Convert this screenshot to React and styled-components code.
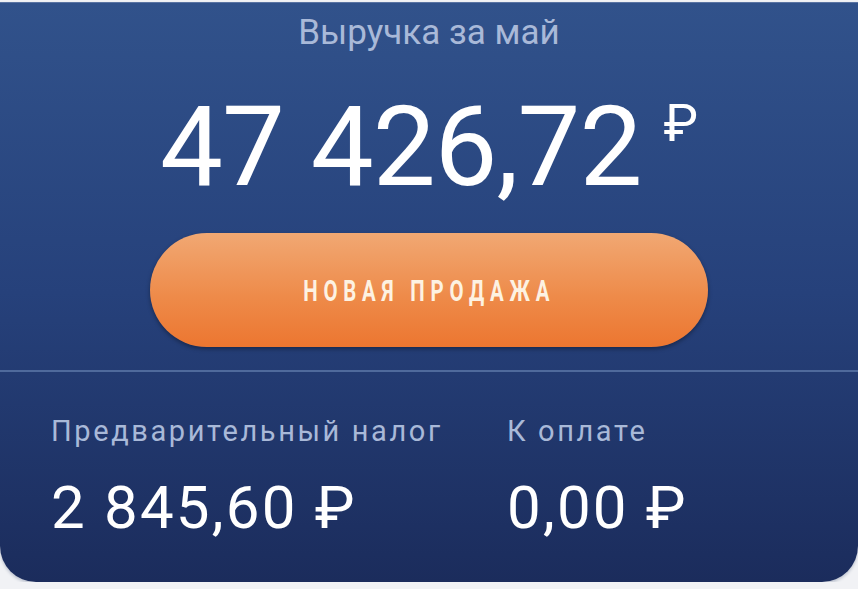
import React from "react";
import styled, { createGlobalStyle } from "styled-components";

const Global = createGlobalStyle`
  html, body {
    margin: 0;
    padding: 0;
    background: #f1f2f5;
    font-family: Roboto, "Noto Sans", sans-serif;
  }
`;

const Card = styled.div`
  width: 858px;
  height: 580px;
  box-sizing: border-box;
  margin-top: 2px;
  border-radius: 0 0 36px 36px;
  background: linear-gradient(180deg, #31528b 0%, #26417b 50%, #1b2c5c 100%);
  border-top: 1px solid #5a74a3;
  display: flex;
  flex-direction: column;
  overflow: hidden;
  box-shadow: 0 2px 3px rgba(40, 60, 100, 0.25);
`;

const Top = styled.div`
  display: flex;
  flex-direction: column;
  align-items: center;
  padding-top: 10px;
  height: 369px;
  box-sizing: border-box;
  border-bottom: 2px solid #4f6a9c;
`;

const Caption = styled.div`
  font-size: 35px;
  color: #a9b9d8;
  line-height: 40px;
`;

const Amount = styled.div`
  display: flex;
  align-items: flex-start;
  margin-top: 38px;
  color: #ffffff;
`;

const AmountValue = styled.span`
  font-size: 112px;
  font-weight: 400;
  letter-spacing: -1px;
  line-height: 112px;
`;

const AmountCurrency = styled.span`
  font-size: 52px;
  line-height: 50px;
  margin-left: 22px;
  margin-top: 8px;
`;

const SaleButton = styled.button`
  margin-top: 30px;
  width: 558px;
  height: 114px;
  border: none;
  border-radius: 57px;
  background: linear-gradient(180deg, #f1a873 0%, #ee8b4a 55%, #ec7630 100%);
  box-shadow: 0 2px 4px rgba(0, 0, 0, 0.35);
  cursor: pointer;
  display: flex;
  align-items: center;
  justify-content: center;
`;

const SaleLabel = styled.span`
  display: inline-block;
  color: #fdf2e2;
  font-family: Roboto, sans-serif;
  font-weight: 700;
  font-size: 30px;
  letter-spacing: 8.5px;
  transform: scaleX(0.68);
  white-space: nowrap;
`;

const Stats = styled.div`
  display: flex;
  padding: 42px 0 0 51px;
`;

const Stat = styled.div`
  display: flex;
  flex-direction: column;
  width: ${(p) => p.$width}px;
`;

const StatLabel = styled.div`
  font-size: 29px;
  color: #a9b9d8;
  line-height: 34px;
  letter-spacing: 2.6px;
`;

const StatValue = styled.div`
  margin-top: 25px;
  font-size: 60px;
  color: #ffffff;
  line-height: 70px;
  letter-spacing: 2.2px;
`;

export default function App() {
  return (
    <>
      <Global />
      <Card>
        <Top>
          <Caption>Выручка за май</Caption>
          <Amount>
            <AmountValue>47 426,72</AmountValue>
            <AmountCurrency>₽</AmountCurrency>
          </Amount>
          <SaleButton>
            <SaleLabel>НОВАЯ ПРОДАЖА</SaleLabel>
          </SaleButton>
        </Top>
        <Stats>
          <Stat $width={456}>
            <StatLabel>Предварительный налог</StatLabel>
            <StatValue>2 845,60 ₽</StatValue>
          </Stat>
          <Stat $width={300}>
            <StatLabel>К оплате</StatLabel>
            <StatValue>0,00 ₽</StatValue>
          </Stat>
        </Stats>
      </Card>
    </>
  );
}
